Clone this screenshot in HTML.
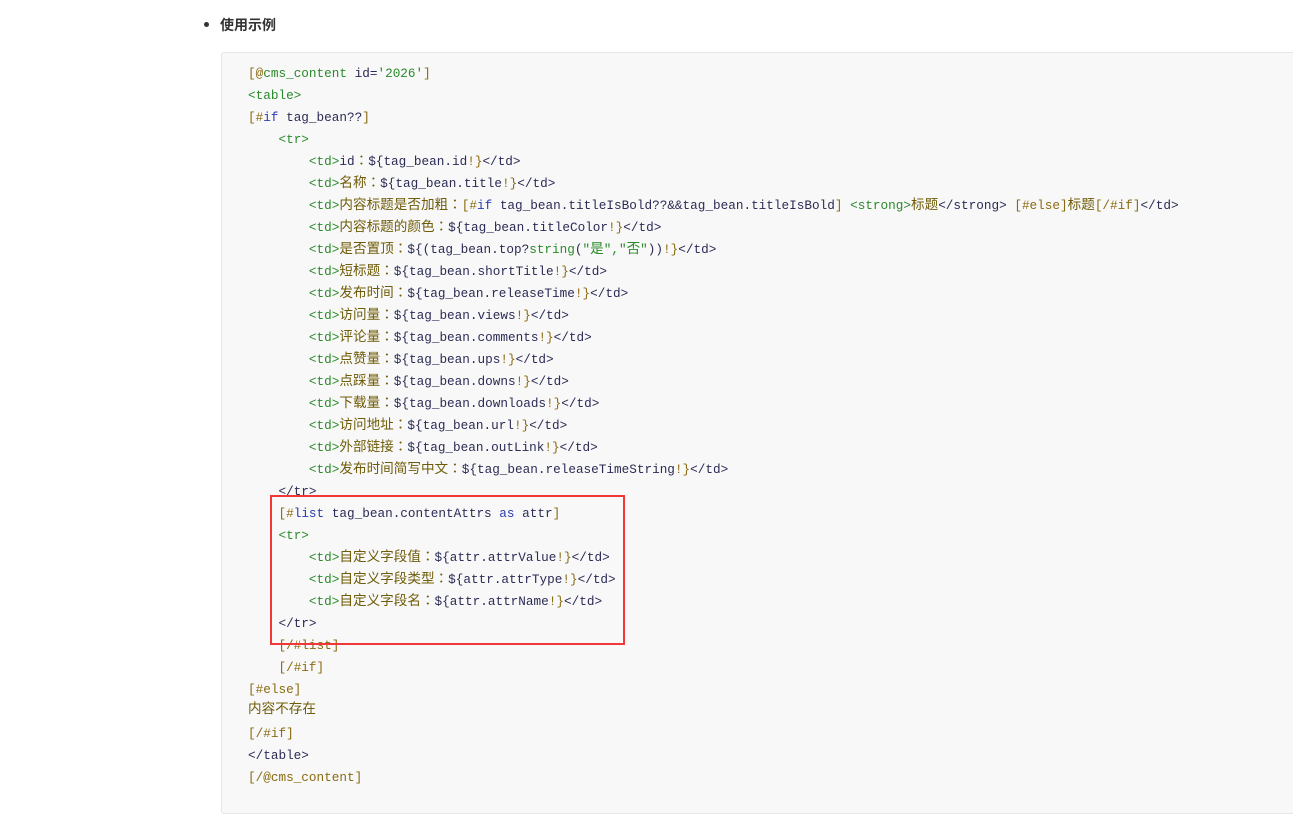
<html><head><style>
body{margin:0;background:#fff;width:1293px;height:786px;overflow:hidden;position:relative;font-family:"Liberation Sans","Noto Sans CJK SC",sans-serif}
.h{position:absolute;left:220px;top:15px;font-size:14px;font-weight:bold;color:#333}
.dot{position:absolute;left:204px;top:22px;width:5px;height:5px;border-radius:50%;background:#333}
.code{position:absolute;left:221px;top:52px;width:1080px;height:760px;background:#f8f8f8;border:1px solid #e6e6e6;border-radius:3px}
.pre{position:absolute;left:248px;top:63px;margin:0;font-family:"Liberation Mono","Noto Sans CJK SC",monospace;font-size:12.7px;color:#2b2b55}
.pre div{height:22px;line-height:22px;white-space:pre;overflow:visible}
i{font-style:normal;font-family:"Noto Sans CJK SC",sans-serif;font-size:13.6px;line-height:1;color:#6e5c08}
i b{font-weight:normal;font-family:"Noto Sans CJK TC",sans-serif}
.g{color:#2a8a2a}.b{color:#8a6a10}.k{color:#2a3cb0}.s{color:#2a8a2a}
.box{position:absolute;left:270px;top:495px;width:351px;height:146px;border:2px solid #f0383a}
</style></head><body>
<div class="dot"></div><div class="h">使用示例</div>
<div class="code"></div>
<div class="pre">
<div><span class="b">[@</span><span class="g">cms_content</span> id=<span class="s">'2026'</span><span class="b">]</span></div>
<div><span class="g">&lt;table&gt;</span></div>
<div><span class="b">[#</span><span class="k">if</span> tag_bean??<span class="b">]</span></div>
<div>    <span class="g">&lt;tr&gt;</span></div>
<div>        <span class="g">&lt;td&gt;</span>id<i><b>：</b></i>${tag_bean.id<span class="b">!}</span>&lt;/td&gt;</div>
<div>        <span class="g">&lt;td&gt;</span><i>名称<b>：</b></i>${tag_bean.title<span class="b">!}</span>&lt;/td&gt;</div>
<div>        <span class="g">&lt;td&gt;</span><i>内容标题是否加粗<b>：</b></i><span class="b">[#</span><span class="k">if</span> tag_bean.titleIsBold??&amp;&amp;tag_bean.titleIsBold<span class="b">]</span> <span class="g">&lt;strong&gt;</span><i>标题</i>&lt;/strong&gt; <span class="b">[#else]</span><i>标题</i><span class="b">[/#if]</span>&lt;/td&gt;</div>
<div>        <span class="g">&lt;td&gt;</span><i>内容标题的颜色<b>：</b></i>${tag_bean.titleColor<span class="b">!}</span>&lt;/td&gt;</div>
<div>        <span class="g">&lt;td&gt;</span><i>是否置顶<b>：</b></i>${(tag_bean.top?<span class="g">string</span>(<span class="s">"<i style="color:#2a8a2a">是</i>","<i style="color:#2a8a2a">否</i>"</span>))<span class="b">!}</span>&lt;/td&gt;</div>
<div>        <span class="g">&lt;td&gt;</span><i>短标题<b>：</b></i>${tag_bean.shortTitle<span class="b">!}</span>&lt;/td&gt;</div>
<div>        <span class="g">&lt;td&gt;</span><i>发布时间<b>：</b></i>${tag_bean.releaseTime<span class="b">!}</span>&lt;/td&gt;</div>
<div>        <span class="g">&lt;td&gt;</span><i>访问量<b>：</b></i>${tag_bean.views<span class="b">!}</span>&lt;/td&gt;</div>
<div>        <span class="g">&lt;td&gt;</span><i>评论量<b>：</b></i>${tag_bean.comments<span class="b">!}</span>&lt;/td&gt;</div>
<div>        <span class="g">&lt;td&gt;</span><i>点赞量<b>：</b></i>${tag_bean.ups<span class="b">!}</span>&lt;/td&gt;</div>
<div>        <span class="g">&lt;td&gt;</span><i>点踩量<b>：</b></i>${tag_bean.downs<span class="b">!}</span>&lt;/td&gt;</div>
<div>        <span class="g">&lt;td&gt;</span><i>下载量<b>：</b></i>${tag_bean.downloads<span class="b">!}</span>&lt;/td&gt;</div>
<div>        <span class="g">&lt;td&gt;</span><i>访问地址<b>：</b></i>${tag_bean.url<span class="b">!}</span>&lt;/td&gt;</div>
<div>        <span class="g">&lt;td&gt;</span><i>外部链接<b>：</b></i>${tag_bean.outLink<span class="b">!}</span>&lt;/td&gt;</div>
<div>        <span class="g">&lt;td&gt;</span><i>发布时间简写中文<b>：</b></i>${tag_bean.releaseTimeString<span class="b">!}</span>&lt;/td&gt;</div>
<div>    &lt;/tr&gt;</div>
<div>    <span class="b">[#</span><span class="k">list</span> tag_bean.contentAttrs <span class="k">as</span> attr<span class="b">]</span></div>
<div>    <span class="g">&lt;tr&gt;</span></div>
<div>        <span class="g">&lt;td&gt;</span><i>自定义字段值<b>：</b></i>${attr.attrValue<span class="b">!}</span>&lt;/td&gt;</div>
<div>        <span class="g">&lt;td&gt;</span><i>自定义字段类型<b>：</b></i>${attr.attrType<span class="b">!}</span>&lt;/td&gt;</div>
<div>        <span class="g">&lt;td&gt;</span><i>自定义字段名<b>：</b></i>${attr.attrName<span class="b">!}</span>&lt;/td&gt;</div>
<div>    &lt;/tr&gt;</div>
<div>    <span class="b">[/#list]</span></div>
<div>    <span class="b">[/#if]</span></div>
<div><span class="b">[#else]</span></div>
<div><i>内容不存在</i></div>
<div><span class="b">[/#if]</span></div>
<div>&lt;/table&gt;</div>
<div><span class="b">[/@cms_content]</span></div>
</div>
<div class="box"></div>
</body></html>
